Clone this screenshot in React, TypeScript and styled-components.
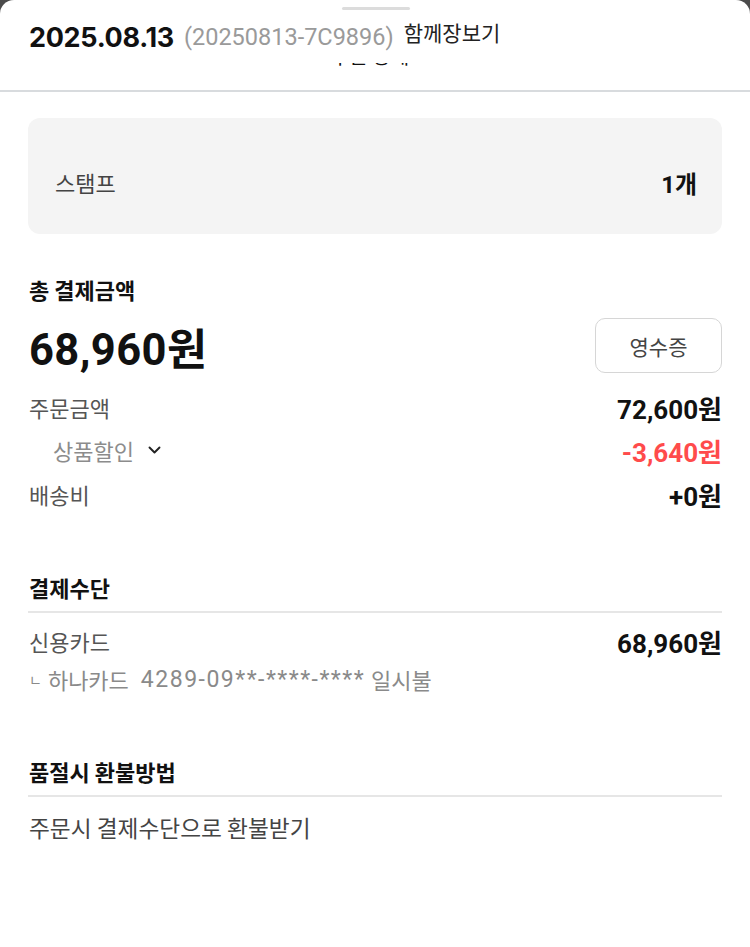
import React from "react";
import styled, { createGlobalStyle } from "styled-components";

const Global = createGlobalStyle`
  html, body { margin: 0; padding: 0; background: #4b4b4b; }
  body { font-family: Roboto, "Noto Sans CJK KR", sans-serif; }
  * { box-sizing: border-box; }
`;

const Sheet = styled.div`
  background: #fff;
  border-radius: 14px 14px 0 0;
  min-height: 947px;
  position: relative;
  overflow: hidden;
`;

const Handle = styled.div`
  position: absolute;
  top: 7px;
  left: 342px;
  width: 68px;
  height: 3px;
  border-radius: 2px;
  background: #dcdcdc;
`;

const Header = styled.header`
  height: 92px;
  border-bottom: 2px solid #d8dbde;
  padding: 22px 28px 0 29px;
  display: flex;
  flex-direction: column;
`;

const TitleRow = styled.div`
  display: flex;
  align-items: center;
  height: 30px;
`;

const DateText = styled.span`
  font-family: Inter, "Noto Sans CJK KR", sans-serif;
  font-weight: 700;
  font-size: 27px;
  color: #111;
  letter-spacing: -0.3px;
  margin-right: 10px;
`;

const OrderNo = styled.span`
  font-family: Roboto, "Noto Sans CJK KR", sans-serif;
  font-size: 23.5px;
  color: #9a9a9a;
  margin-right: 10px;
`;

const Together = styled.span`
  font-family: "Noto Sans CJK KR", sans-serif;
  font-size: 21px;
  color: #222;
  position: relative;
  top: -5px;
`;

const Peek = styled.div`
  height: 3px;
  margin-top: 11px;
  overflow: hidden;
  position: relative;
`;

const PeekText = styled.div`
  position: absolute;
  bottom: 0;
  left: 0;
  right: 0;
  display: flex;
  justify-content: space-between;
  font-family: "Noto Sans CJK KR", sans-serif;
  font-size: 20px;
  line-height: 20px;
  color: #111;
  padding-left: 302px;
`;

const PeekDots = styled.span`
  display: flex;
  gap: 18px;
  margin-right: 3px;
`;

const Content = styled.main`
  padding: 26px 28px 0 28px;
  display: flex;
  flex-direction: column;
`;

const StampCard = styled.div`
  background: #f4f4f4;
  border-radius: 12px;
  height: 116px;
  padding: 12px 25px 0 27px;
  display: flex;
  align-items: center;
  justify-content: space-between;
`;

const StampLabel = styled.span`
  font-family: "Noto Sans CJK KR", sans-serif;
  font-size: 22px;
  color: #444;
`;

const StampValue = styled.span`
  font-family: Roboto, "Noto Sans CJK KR", sans-serif;
  font-size: 24px;
  font-weight: 700;
  color: #111;
`;

const SectionTitle = styled.h2<{ $top: number }>`
  margin: ${(p) => p.$top}px 0 0 1px;
  font-family: "Noto Sans CJK KR", sans-serif;
  font-size: 22px;
  font-weight: 700;
  color: #111;
  line-height: 30px;
  height: 30px;
`;

const TotalRow = styled.div`
  margin-top: 14px;
  height: 55px;
  display: flex;
  align-items: center;
  justify-content: space-between;
`;

const TotalAmount = styled.span`
  font-family: Roboto, "Noto Sans CJK KR", sans-serif;
  font-size: 43.5px;
  font-weight: 700;
  color: #111;
  margin-left: 1px;
  margin-top: 2px;
  letter-spacing: 0.4px;
`;

const ReceiptButton = styled.button`
  width: 127px;
  height: 55px;
  border: 1.5px solid #d6d6d6;
  border-radius: 10px;
  background: #fff;
  font-family: "Noto Sans CJK KR", sans-serif;
  font-size: 21px;
  color: #444;
  cursor: pointer;
  padding: 0;
`;

const Row = styled.div<{ $top: number }>`
  margin-top: ${(p) => p.$top}px;
  display: flex;
  align-items: center;
  justify-content: space-between;
  height: 30px;
`;

const Label = styled.span<{ $sub?: boolean }>`
  font-family: "Noto Sans CJK KR", sans-serif;
  font-size: 22px;
  color: ${(p) => (p.$sub ? "#8c8c8c" : "#555")};
  margin-left: ${(p) => (p.$sub ? "25px" : "1px")};
  display: inline-flex;
  align-items: center;
  gap: 13px;
`;

const Value = styled.span<{ $red?: boolean }>`
  font-family: Roboto, "Noto Sans CJK KR", sans-serif;
  font-size: 26px;
  font-weight: 700;
  color: ${(p) => (p.$red ? "#ff4b4b" : "#111")};
`;

const Divider = styled.div<{ $top: number }>`
  margin-top: ${(p) => p.$top}px;
  height: 2px;
  background: #e6e6e6;
`;

const Detail = styled.div`
  margin-top: 8px;
  margin-left: 1px;
  height: 30px;
  font-family: "Noto Sans CJK KR", sans-serif;
  font-size: 22px;
  color: #8a8a8a;
  display: flex;
  align-items: center;
  gap: 6px;
`;

const Corner = styled.span`
  font-size: 14px;
`;

const CardNo = styled.span`
  font-family: Roboto, "Noto Sans CJK KR", sans-serif;
  font-size: 23px;
  letter-spacing: 1.5px;
  margin-left: 6px;
`;

const Plain = styled.div`
  margin-top: 16px;
  margin-left: 1px;
  height: 30px;
  line-height: 30px;
  font-family: "Noto Sans CJK KR", sans-serif;
  font-size: 22.7px;
  color: #444;
`;

const Chevron = () => (
  <svg width="15" height="14" viewBox="0 0 15 14" fill="none">
    <path d="M2.5 4.5 L7.5 9.5 L12.5 4.5" stroke="#222" strokeWidth="1.9" strokeLinecap="round" strokeLinejoin="round" />
  </svg>
);

export default function App() {
  return (
    <>
      <Global />
      <Sheet>
        <Handle />
        <Header>
          <TitleRow>
            <DateText>2025.08.13</DateText>
            <OrderNo>(20250813-7C9896)</OrderNo>
            <Together>함께장보기</Together>
          </TitleRow>
          <Peek>
            <PeekText>
              <span>주문 상세</span>
              <PeekDots>
                <span>·</span>
                <span>·</span>
              </PeekDots>
            </PeekText>
          </Peek>
        </Header>
        <Content>
          <StampCard>
            <StampLabel>스탬프</StampLabel>
            <StampValue>1개</StampValue>
          </StampCard>

          <SectionTitle $top={40}>총 결제금액</SectionTitle>
          <TotalRow>
            <TotalAmount>68,960원</TotalAmount>
            <ReceiptButton>영수증</ReceiptButton>
          </TotalRow>
          <Row $top={19}>
            <Label>주문금액</Label>
            <Value>72,600원</Value>
          </Row>
          <Row $top={13}>
            <Label $sub>
              상품할인 <Chevron />
            </Label>
            <Value $red>-3,640원</Value>
          </Row>
          <Row $top={14}>
            <Label>배송비</Label>
            <Value>+0원</Value>
          </Row>

          <SectionTitle $top={63}>결제수단</SectionTitle>
          <Divider $top={9} />
          <Row $top={13}>
            <Label>신용카드</Label>
            <Value>68,960원</Value>
          </Row>
          <Detail>
            <Corner>ㄴ</Corner>
            <span>하나카드</span>
            <CardNo>4289-09**-****-****</CardNo>
            <span>일시불</span>
          </Detail>

          <SectionTitle $top={62}>품절시 환불방법</SectionTitle>
          <Divider $top={9} />
          <Plain>주문시 결제수단으로 환불받기</Plain>
        </Content>
      </Sheet>
    </>
  );
}
